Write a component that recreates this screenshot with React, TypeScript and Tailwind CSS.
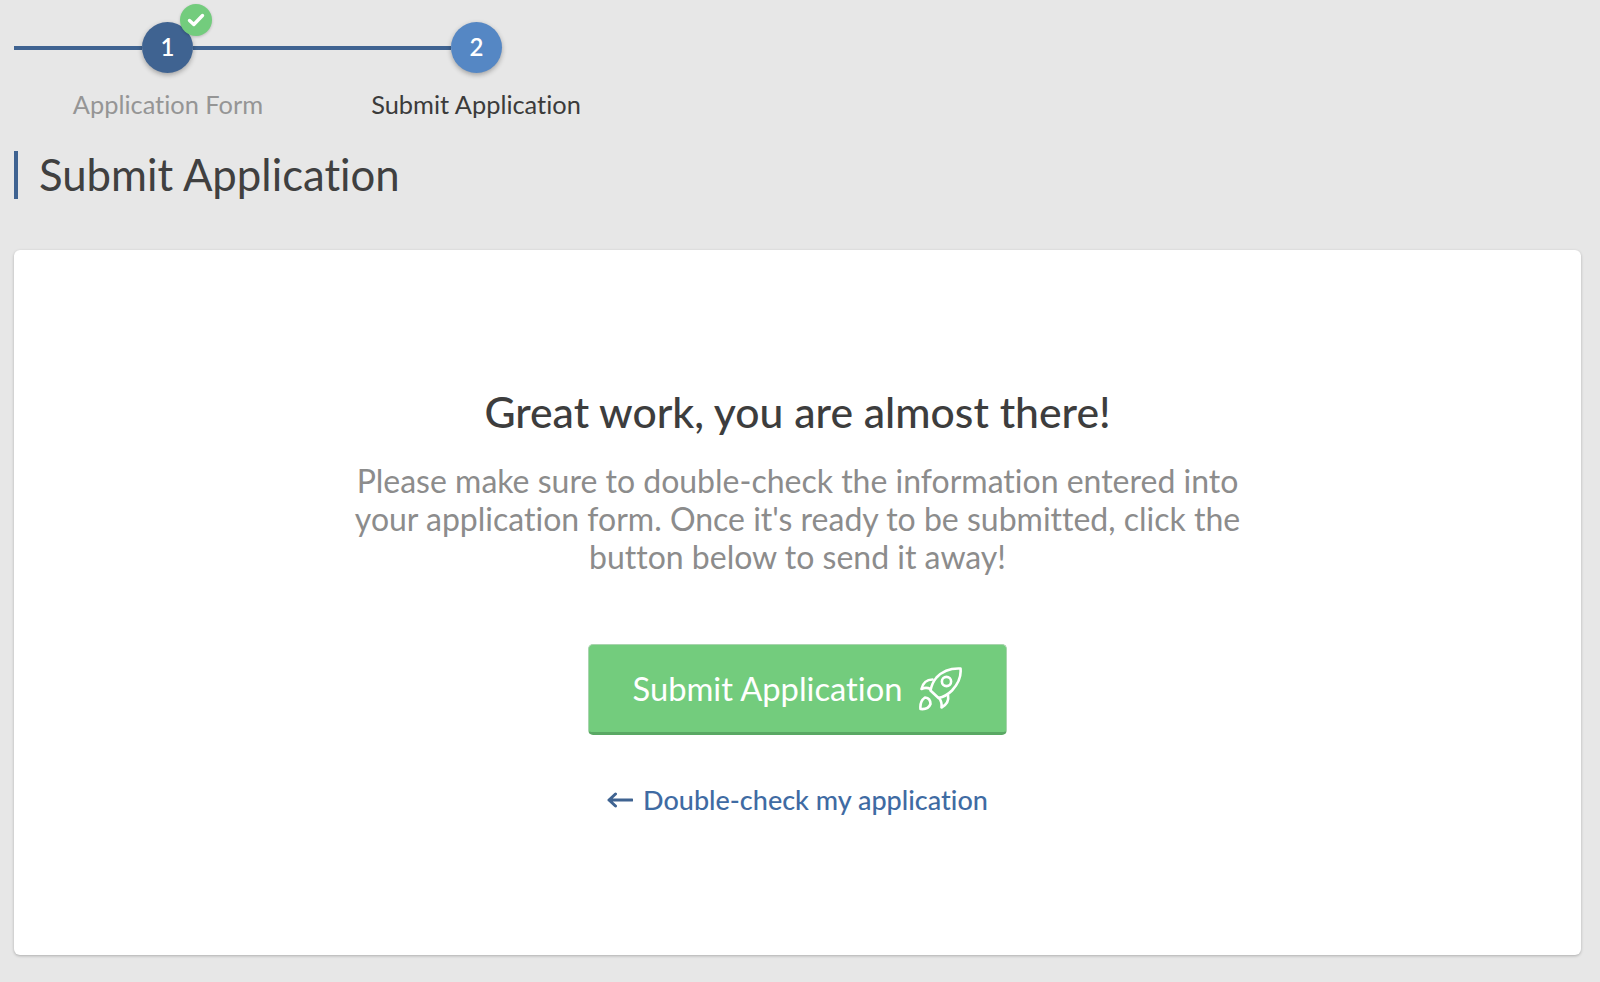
const font = "font-['Lato','Open_Sans',sans-serif] [font-variant-ligatures:none]"

function Rocket() {
  return (
    <svg width="44" height="45" viewBox="0 0 44 45" fill="none" stroke="white" strokeWidth="2.6" strokeLinejoin="round" strokeLinecap="round">
      <path d="M42.5 2.5C33 2 24.5 5 18.5 11.5C15.5 15 13.5 19.5 12.5 24.5L20.5 32C25.5 31 30 28.5 34 24.5C40 18 43.5 11 42.5 2.5Z" />
      <circle cx="28.5" cy="15.5" r="4.6" />
      <path d="M14.5 13.5C9.5 13.5 5 16.5 3.5 23C6.5 21.5 9.5 21.5 12.5 23" />
      <path d="M30 29C31 34 29 38.5 23.5 41.5C24 37.5 23 34.5 21 32" />
      <path d="M7 31.5C3.5 34 2 38.5 2.5 43C7 43.5 11 42 12.5 38C12.5 34.5 11 32 7 31.5Z" />
    </svg>
  )
}

function Check() {
  return (
    <svg width="18" height="14" viewBox="0 0 18 14" fill="none" stroke="white" strokeWidth="3.4" strokeLinecap="round" strokeLinejoin="round">
      <path d="M2.5 7.5L6.8 11.5L15.5 2.5" />
    </svg>
  )
}

function Step({ n, color, done }: { n: number; color: string; done?: boolean }) {
  return (
    <div className={`relative flex size-[51px] shrink-0 items-center justify-center rounded-full pb-[2px] text-[24px] font-semibold text-white shadow-[0_2px_5px_rgba(0,0,0,0.3)] ${color}`}>
      {n}
      {done ? (
        <div className="absolute -right-[19px] -top-[18px] flex size-[32px] items-center justify-center rounded-full bg-[#73cc7d] shadow-[0_1px_3px_rgba(0,0,0,0.2)]">
          <Check />
        </div>
      ) : null}
    </div>
  )
}

export default function App() {
  return (
    <div className={`h-[982px] overflow-hidden bg-[#e7e7e7] pl-[14px] pr-[19px] pt-[22px] ${font}`}>
      <div className="flex h-[51px] items-center">
        <div className="h-[4px] w-[128px] bg-[#3f6391]" />
        <Step n={1} color="bg-[#3f6391]" done />
        <div className="h-[4px] w-[258px] bg-[#3f6391]" />
        <Step n={2} color="bg-[#5587c4]" />
      </div>
      <div className="mt-[16px] flex text-[25.4px] leading-[30px]">
        <div className="w-[308px] text-center text-[#959595]">Application Form</div>
        <div className="w-[308px] text-center text-[#3b3b3b]">Submit Application</div>
      </div>
      <div className="mt-[32px] flex h-[48px] items-center border-l-[4px] border-[#3f6391] pl-[21px] text-[43.7px] text-[#404040]">
        Submit Application
      </div>
      <div className="mt-[51px] flex h-[705px] flex-col items-center rounded-[6px] bg-white pt-[134px] shadow-[0_1px_3px_rgba(0,0,0,0.25)]">
        <h1 className="text-[42.7px] font-medium leading-[56px] text-[#3d3d3d]">Great work, you are almost there!</h1>
        <p className="mt-[22px] w-[900px] text-center text-[32px] leading-[38px] text-[#8c8c8c]">
          Please make sure to double-check the information entered into your application form. Once it's ready to be submitted, click the button below to send it away!
        </p>
        <button className="mt-[68px] flex h-[91px] w-[419px] items-center justify-center gap-[16px] rounded-[5px] border border-b-[3px] border-[#a9d4ae] border-b-[#5aa864] bg-[#73cc7d] text-[32.7px] text-white">
          Submit Application
          <Rocket />
        </button>
        <a className="mt-[47px] flex items-center gap-[10px] text-[27px] font-medium leading-[36px] text-[#3f6ba3]">
          <svg width="26" height="16" viewBox="0 0 26 16" fill="none" stroke="#3f6391" strokeWidth="3" strokeLinecap="round" strokeLinejoin="round">
            <path d="M25 8H2M8.5 2L2 8L8.5 14" />
          </svg>
          Double-check my application
        </a>
      </div>
    </div>
  )
}
